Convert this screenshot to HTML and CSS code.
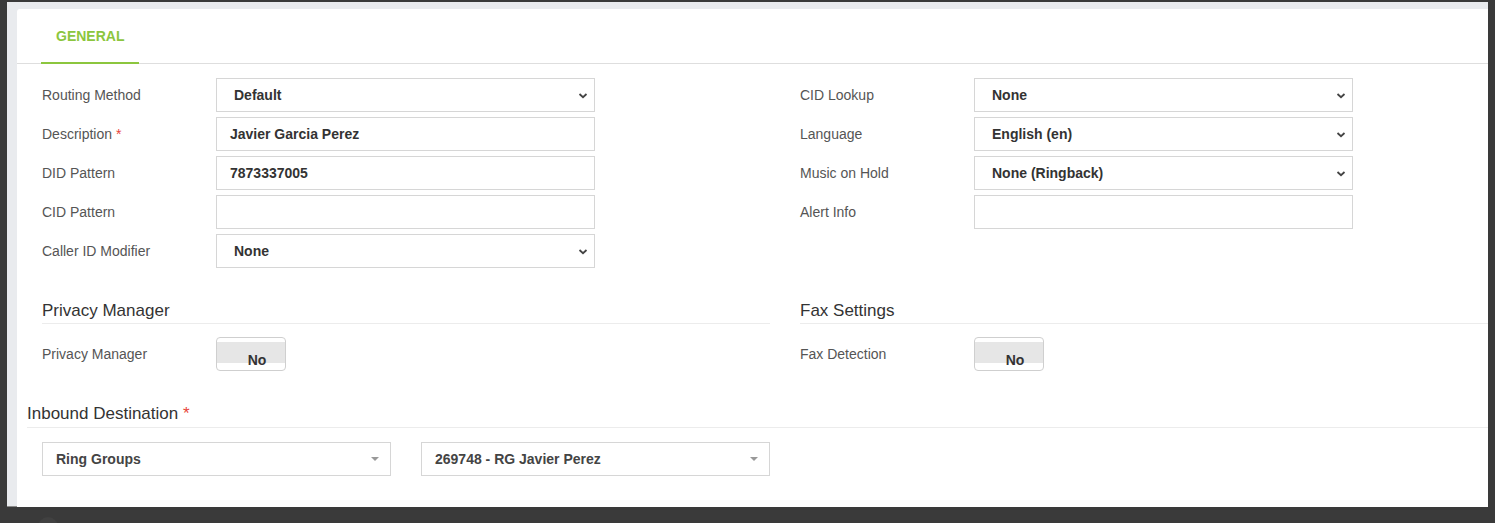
FILE: index.html
```html
<!DOCTYPE html>
<html>
<head>
<meta charset="utf-8">
<link rel="stylesheet" href="styles.css">
</head>
<body>
<div class="frame">
  <div class="panel">
    <div class="tabs">
      <div class="tab">GENERAL</div>
    </div>
    <div class="content">
      <div class="cols">
        <div class="col">
          <div class="row"><div class="label">Routing Method</div><div class="select"><span>Default</span><svg class="chev" width="10" height="7" viewBox="0 0 10 7"><path d="M1.5 2 L5 5.2 L8.5 2" fill="none" stroke="#444" stroke-width="1.8"/></svg></div></div>
          <div class="row"><div class="label">Description <span class="req">*</span></div><div class="input">Javier Garcia Perez</div></div>
          <div class="row"><div class="label">DID Pattern</div><div class="input">7873337005</div></div>
          <div class="row"><div class="label">CID Pattern</div><div class="input"></div></div>
          <div class="row"><div class="label">Caller ID Modifier</div><div class="select"><span>None</span><svg class="chev" width="10" height="7" viewBox="0 0 10 7"><path d="M1.5 2 L5 5.2 L8.5 2" fill="none" stroke="#444" stroke-width="1.8"/></svg></div></div>
          <div class="heading">Privacy Manager</div>
          <div class="row toggle-row"><div class="label">Privacy Manager</div><div class="toggle"><div class="band">No</div></div></div>
        </div>
        <div class="col">
          <div class="row"><div class="label">CID Lookup</div><div class="select"><span>None</span><svg class="chev" width="10" height="7" viewBox="0 0 10 7"><path d="M1.5 2 L5 5.2 L8.5 2" fill="none" stroke="#444" stroke-width="1.8"/></svg></div></div>
          <div class="row"><div class="label">Language</div><div class="select"><span>English (en)</span><svg class="chev" width="10" height="7" viewBox="0 0 10 7"><path d="M1.5 2 L5 5.2 L8.5 2" fill="none" stroke="#444" stroke-width="1.8"/></svg></div></div>
          <div class="row"><div class="label">Music on Hold</div><div class="select"><span>None (Ringback)</span><svg class="chev" width="10" height="7" viewBox="0 0 10 7"><path d="M1.5 2 L5 5.2 L8.5 2" fill="none" stroke="#444" stroke-width="1.8"/></svg></div></div>
          <div class="row"><div class="label">Alert Info</div><div class="input"></div></div>
          <div class="row spacer"></div>
          <div class="heading">Fax Settings</div>
          <div class="row toggle-row"><div class="label">Fax Detection</div><div class="toggle"><div class="band">No</div></div></div>
        </div>
      </div>
      <div class="heading wide">Inbound Destination <span class="req">*</span></div>
      <div class="dest">
        <div class="dcol"><div class="s2"><span>Ring Groups</span><svg width="8" height="4" viewBox="0 0 8 4"><path d="M0 0 L8 0 L4 4 Z" fill="#999"/></svg></div></div>
        <div class="dcol"><div class="s2"><span>269748 - RG Javier Perez</span><svg width="8" height="4" viewBox="0 0 8 4"><path d="M0 0 L8 0 L4 4 Z" fill="#999"/></svg></div></div>
      </div>
    </div>
  </div>
</div>
<div class="footer">
  <div class="avatar"></div>
</div>
</body>
</html>
```

FILE: styles.css
```css
html, body {
  margin: 0;
  padding: 0;
}
body {
  background: #3a3a3a;
  width: 1495px;
  height: 523px;
  overflow: hidden;
  font-family: "Liberation Sans", Arial, sans-serif;
  font-size: 14px;
}
.frame {
  margin: 2px 0 0 7px;
  width: 1481px;
  height: 505px;
  box-sizing: border-box;
  padding: 7px 0 0 10px;
  background: #e9ebee;
  border-bottom: 1px solid #8a8a8a;
}
.panel {
  background: #fff;
  height: 498px;
  border-radius: 3px 0 0 0;
  overflow: hidden;
}
.tabs {
  height: 55px;
  box-sizing: border-box;
  border-bottom: 1px solid #dedede;
  padding-left: 24px;
  display: flex;
}
.tab {
  width: 98px;
  box-sizing: border-box;
  padding: 18px 0 0 15px;
  color: #8cc63e;
  font-weight: bold;
  font-size: 14px;
  line-height: 18px;
  border-bottom: 2px solid #8cc63e;
  margin-bottom: -1px;
}
.content {
  padding-left: 10px;
}
.cols {
  display: flex;
  width: 1516px;
  padding-top: 14px;
}
.col {
  width: 758px;
  box-sizing: border-box;
  padding: 0 15px;
  flex: none;
}
.row {
  display: flex;
  height: 34px;
  margin-bottom: 5px;
  align-items: center;
}
.row.spacer {
  visibility: hidden;
}
.label {
  width: 174px;
  flex: none;
  color: #555;
  font-size: 14px;
  margin-top: -1px;
}
.req {
  color: #e8453c;
}
.input, .select {
  width: 379px;
  height: 34px;
  box-sizing: border-box;
  border: 1px solid #d6d6d6;
  color: #333;
  font-weight: bold;
  font-size: 14px;
  display: flex;
  align-items: center;
  padding-left: 13px;
}
.select {
  padding-left: 17px;
  padding-right: 6px;
  justify-content: space-between;
}
.heading {
  margin-top: 33px;
  font-size: 17px;
  line-height: 19px;
  color: #333;
  padding-bottom: 3px;
  border-bottom: 1px solid #ececec;
  margin-bottom: 13px;
}
.toggle-row {
  margin-bottom: 0;
}
.toggle {
  width: 70px;
  height: 34px;
  box-sizing: border-box;
  border: 1px solid #cfcfcf;
  border-radius: 4px;
  padding-top: 4px;
}
.band {
  height: 21px;
  box-sizing: border-box;
  background: #e6e6e6;
  padding: 11px 0 0 12px;
  line-height: 14px;
  text-align: center;
  font-weight: bold;
  color: #333;
}
.heading.wide {
  margin-top: 33px;
  padding-bottom: 4px;
  margin-bottom: 14px;
}
.dest {
  display: flex;
  width: 758px;
}
.dcol {
  width: 379px;
  box-sizing: border-box;
  padding: 0 15px;
}
.s2 {
  height: 34px;
  box-sizing: border-box;
  border: 1px solid #d6d6d6;
  display: flex;
  align-items: center;
  justify-content: space-between;
  padding: 0 11px 0 13px;
  color: #444;
  font-weight: bold;
  font-size: 14px;
}
.footer {
  display: flex;
  padding: 10px 0 0 38px;
}
.avatar {
  width: 20px;
  height: 20px;
  border-radius: 50%;
  background: #414141;
}
```
